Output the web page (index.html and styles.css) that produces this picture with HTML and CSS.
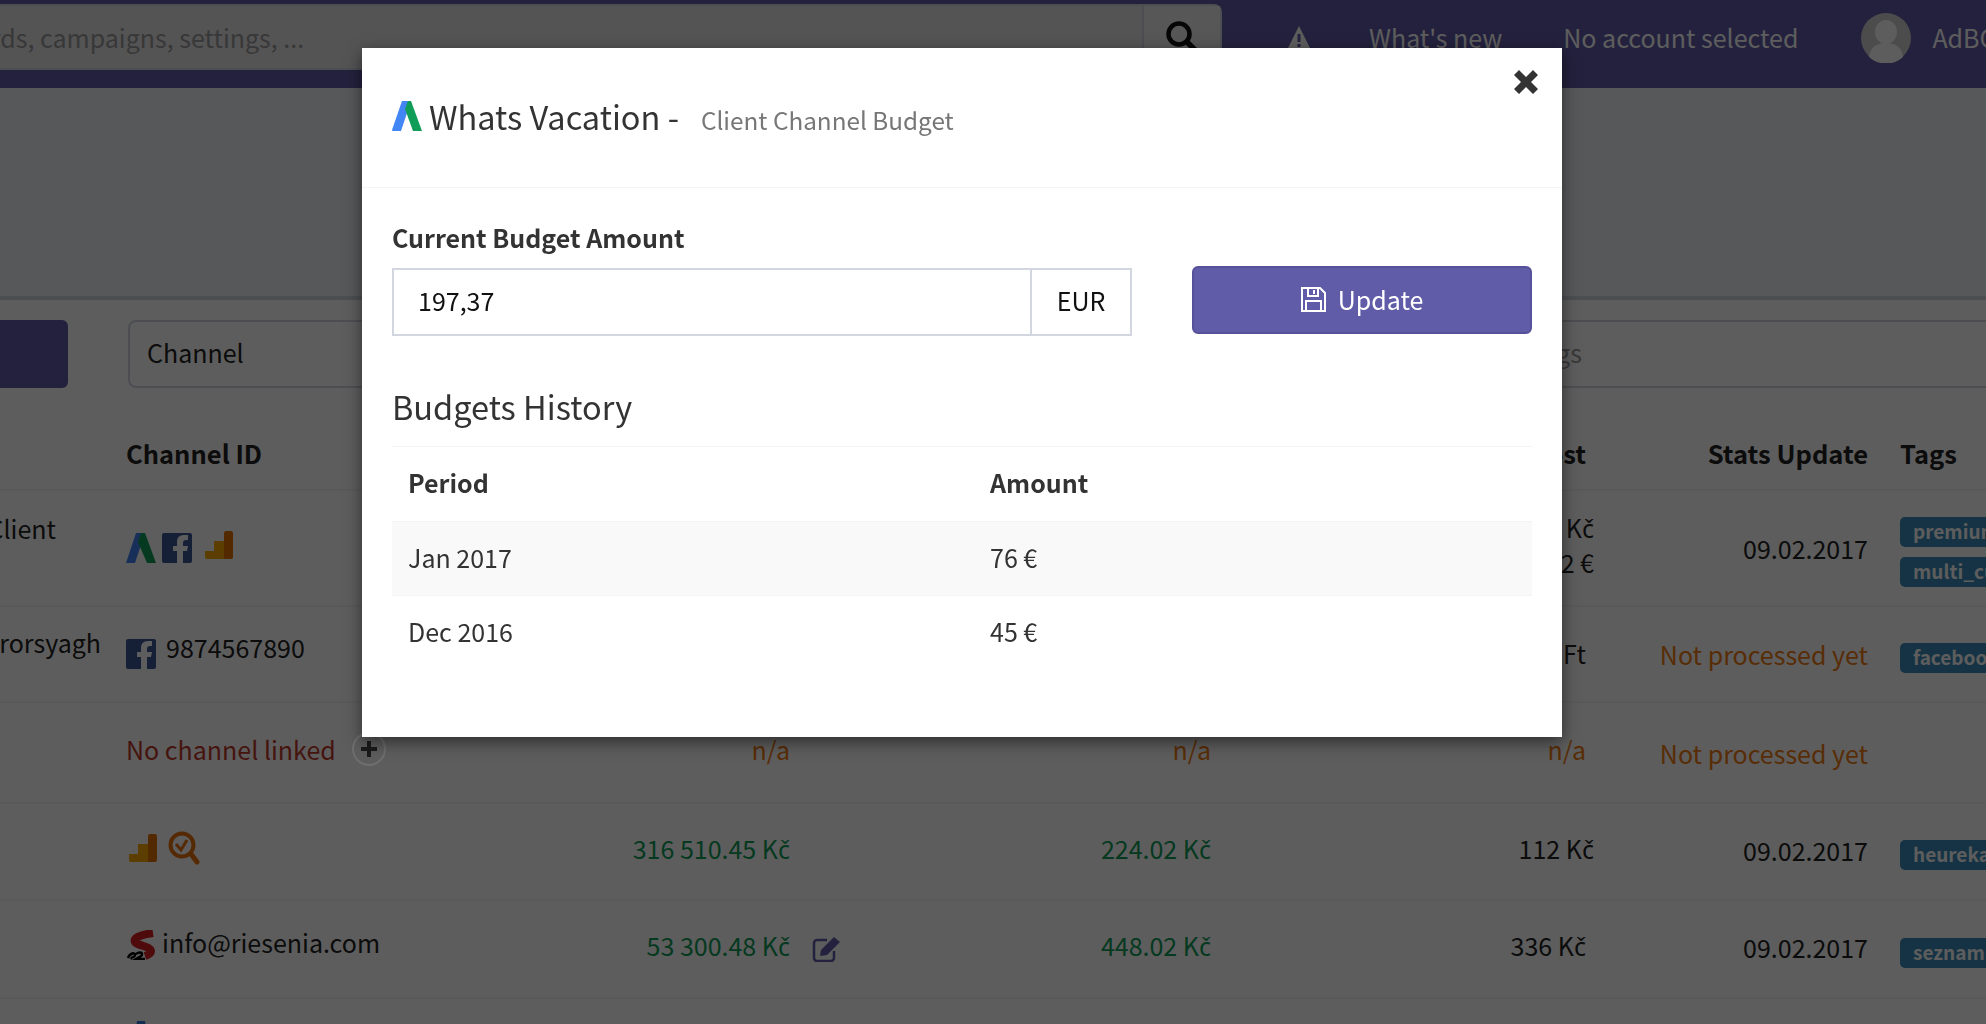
FILE: index.html
```html
<!DOCTYPE html>
<html lang="en">
<head>
	<meta charset="UTF-8">
	<title>Client Channel Budget</title>
	<link rel="stylesheet" href="styles.css">
</head>
<body>
	<div class="page">
		<header class="topbar">
			<div class="search">
				<div class="searchText">Search keywords, campaigns, settings, ...</div>
				<div class="searchBtn">
					<svg width="34" height="34" viewBox="0 0 34 34"><circle cx="14" cy="14" r="10.5" fill="none" stroke="#111" stroke-width="4.5"/><path d="M22 22l9 9" stroke="#111" stroke-width="5.5" stroke-linecap="round"/></svg>
				</div>
			</div>
			<svg class="warn" width="24" height="24" viewBox="0 0 24 24"><path d="M12 0L24 24H0z" fill="#fff"/><path d="M10.5 8h3v8h-3zM10.5 18h3v3h-3z" fill="#605ca8"/></svg>
			<div class="navLink">What's new</div>
			<div class="navLink">No account selected</div>
			<div class="avatar">
				<svg width="50" height="50" viewBox="0 0 50 50"><circle cx="25" cy="25" r="25" fill="#d0d0d0"/><ellipse cx="25" cy="19" rx="11" ry="12" fill="#fff"/><path d="M8 44c1-10 8-14 17-14s16 4 17 14a25 25 0 0 1-34 0z" fill="#fff"/></svg>
			</div>
			<div class="navLink">AdBC</div>
		</header>
		<div class="subhead"></div>
		<div class="content">
			<div class="filters">
				<div class="filterBtn"></div>
				<div class="filterBox">Channel</div>
				<div class="filterBox tagBox">Tags</div>
			</div>
			<table class="list">
				<colgroup>
					<col class="c1"><col class="c2"><col class="c3"><col class="c4"><col class="c5"><col class="c6"><col class="c7"><col class="c8">
				</colgroup>
				<thead>
					<tr><th></th><th>Channel ID</th><th></th><th></th><th></th><th class="num cost">Cost</th><th class="num">Stats Update</th><th>Tags</th></tr>
				</thead>
				<tbody>
					<tr class="r1">
						<td class="name">Client</td>
						<td>
							<div class="chan">
								<svg width="30" height="30" viewBox="0 0 30 30"><path d="M10 0h9L9 30H0z" fill="#4285f4"/><path d="M12 9l3-9h4l11 30h-9z" fill="#0f9d58"/></svg>
								<svg width="30" height="30" viewBox="0 0 30 30"><rect width="30" height="30" rx="2" fill="#3b5998"/><path d="M21 30V18h4l1-5h-5v-3c0-2 1-3 3-3h2V2h-4c-5 0-7 3-7 7v4h-4v5h4v12z" fill="#fff"/></svg>
								<svg class="shift" width="28" height="28" viewBox="0 0 28 28"><path d="M0 20h9v8H2a2 2 0 0 1-2-2z" fill="#f9ab00"/><path d="M9 10h10v18H9z" fill="#f9ab00"/><path d="M19 2a2 2 0 0 1 2-2h5a2 2 0 0 1 2 2v24a2 2 0 0 1-2 2h-7z" fill="#e37400"/></svg>
							</div>
						</td>
						<td></td><td></td><td></td>
						<td class="num cost wide two">112 K<span class="cz">č</span><br>0.42 €</td>
						<td class="num date">09.02.2017</td>
						<td class="tagCell"><span class="tag">premium</span><span class="tag">multi_currency</span></td>
					</tr>
					<tr class="r2">
						<td class="name">Errorsyagh</td>
						<td>
							<div class="chan">
								<svg width="30" height="30" viewBox="0 0 30 30"><rect width="30" height="30" rx="2" fill="#3b5998"/><path d="M21 30V18h4l1-5h-5v-3c0-2 1-3 3-3h2V2h-4c-5 0-7 3-7 7v4h-4v5h4v12z" fill="#fff"/></svg>
								<span class="chanId">9874567890</span>
							</div>
						</td>
						<td></td><td></td><td></td>
						<td class="num cost ft">900 Ft</td>
						<td class="num pending">Not processed yet</td>
						<td class="tagCell"><span class="tag">facebook</span></td>
					</tr>
					<tr class="r3">
						<td></td>
						<td class="upper">
							<div class="chan">
								<span class="noChan">No channel linked</span>
								<span class="addBtn">
									<svg width="18" height="18" viewBox="0 0 18 18"><path d="M7 1h4v6h6v4h-6v6H7v-6H1V7h6z" fill="#1a1a1a"/></svg>
								</span>
							</div>
						</td>
						<td class="num warnText">n/a</td><td></td>
						<td class="num warnText">n/a</td>
						<td class="num cost warnText">n/a</td>
						<td class="num pending">Not processed yet</td>
						<td></td>
					</tr>
					<tr class="r4">
						<td></td>
						<td class="upper">
							<div class="chan">
								<svg class="ga" width="28" height="28" viewBox="0 0 28 28"><path d="M0 20h9v8H2a2 2 0 0 1-2-2z" fill="#f9ab00"/><path d="M9 10h10v18H9z" fill="#f9ab00"/><path d="M19 2a2 2 0 0 1 2-2h5a2 2 0 0 1 2 2v24a2 2 0 0 1-2 2h-7z" fill="#e37400"/></svg>
								<svg class="mag" width="32" height="34" viewBox="0 0 32 34"><circle cx="14" cy="14" r="11.5" fill="none" stroke="#e8710a" stroke-width="4"/><path d="M8 13l5 6 6-10" fill="none" stroke="#e8710a" stroke-width="3"/><path d="M23 23l6 8" stroke="#e8710a" stroke-width="5" stroke-linecap="round"/></svg>
							</div>
						</td>
						<td class="num good">316 510.45 K<span class="cz">č</span></td><td></td>
						<td class="num good">224.02 K<span class="cz">č</span></td>
						<td class="num cost wide">112 K<span class="cz">č</span></td>
						<td class="num date">09.02.2017</td>
						<td class="tagCell"><span class="tag">heureka</span></td>
					</tr>
					<tr class="r5">
						<td></td>
						<td class="upper">
							<div class="chan">
								<svg width="30" height="30" viewBox="0 0 30 30"><path d="M27 3C13 5 7 8 9 12c3 4 15 4 16 9 0 3-3 4-6 5" fill="none" stroke="#d81f1f" stroke-width="8"/><path d="M2 28c2-5 7-6 7-3 0 3-5 2-3 4M10 24c4-3 8-1 5 2l-5 3h9" fill="none" stroke="#000" stroke-width="2.5"/></svg>
								<span class="chanId mail">info@riesenia.com</span>
							</div>
						</td>
						<td class="num good">53 300.48 K<span class="cz">č</span></td>
						<td class="editCell">
							<svg width="30" height="26" viewBox="0 0 30 26"><path d="M15 4H5a3 3 0 0 0-3 3v15a3 3 0 0 0 3 3h14a3 3 0 0 0 3-3v-7" fill="none" stroke="#605ca8" stroke-width="2.5"/><path d="M8 20l1-6L22 1l6 5-13 13z" fill="#605ca8"/></svg>
						</td>
						<td class="num good">448.02 K<span class="cz">č</span></td>
						<td class="num cost">336 K<span class="cz">č</span></td>
						<td class="num date">09.02.2017</td>
						<td class="tagCell"><span class="tag">seznam</span></td>
					</tr>
					<tr class="r6">
						<td></td>
						<td class="lastCell"><svg class="lastIcon" width="12" height="12" viewBox="0 0 12 12"><path d="M2 0h8l2 12H0z" fill="#3b7ddd"/></svg></td>
						<td></td><td></td><td></td><td></td><td></td><td></td>
					</tr>
				</tbody>
			</table>
		</div>
	</div>

	<div class="overlay"></div>

	<div class="modal">
		<div class="modalHead">
			<svg class="modalLogo" width="30" height="30" viewBox="0 0 30 30"><path d="M10 0h9L9 30H1a1 1 0 0 1-1-1z" fill="#4285f4"/><path d="M13 8l3-8h3l11 30h-9z" fill="#0f9d58"/></svg>
			<h2 class="modalTitle">Whats Vacation -</h2>
			<span class="modalSub">Client Channel Budget</span>
			<svg class="close" width="24" height="24" viewBox="0 0 24 24"><path d="M5 0l7 7 7-7 5 5-7 7 7 7-5 5-7-7-7 7-5-5 7-7-7-7z" fill="#333"/></svg>
		</div>
		<div class="modalBody">
			<div class="budgetLabel">Current Budget Amount</div>
			<div class="budgetRow">
				<div class="inputGroup">
					<div class="amount">197,37</div>
					<div class="currency">EUR</div>
				</div>
				<div class="updateBtn">
					<svg width="25" height="25" viewBox="0 0 25 25"><path d="M2 1h17l5 5v18H1V1z" fill="none" stroke="#fff" stroke-width="2"/><path d="M7 1v8h10V1M13 3v4M5 24V14h15v10" fill="none" stroke="#fff" stroke-width="2"/></svg>
					Update
				</div>
			</div>
			<h3 class="historyTitle">Budgets History</h3>
			<table class="history">
				<thead><tr><th class="periodCol">Period</th><th>Amount</th></tr></thead>
				<tbody>
					<tr class="odd"><td>Jan 2017</td><td>76 €</td></tr>
					<tr><td>Dec 2016</td><td>45 €</td></tr>
				</tbody>
			</table>
		</div>
	</div>
</body>
</html>
```

FILE: styles.css
```css
html, body{
	margin: 0;
	height: 100%;
	overflow: hidden;
}
body{
	font-family: "Noto Sans CJK SC", "Noto Sans", sans-serif;
	font-size: 25px;
	color: #333;
	background: #ecf0f5;
}
.page{
	height: 1024px;
	overflow: hidden;
}
.cz{
	font-family: "Noto Sans", sans-serif;
}

/* top bar */
.topbar{
	display: flex;
	align-items: center;
	height: 88px;
	background: #605ca8;
	box-sizing: border-box;
	padding-bottom: 12px;
}
.search{
	display: flex;
	flex: none;
	align-self: flex-start;
	width: 1222px;
	height: 66px;
	margin-top: 4px;
	box-sizing: border-box;
	background: #e6e6e8;
	border: 2px solid #d2d6de;
	border-left: 0;
	border-radius: 0 8px 8px 0;
	color: #999;
}
.searchText{
	flex: 1;
	margin-left: -170px;
	line-height: 62px;
	white-space: nowrap;
}
.searchBtn{
	display: flex;
	align-items: center;
	justify-content: center;
	width: 76px;
	border-left: 2px solid #d2d6de;
	background: #eee;
}
.warn{
	flex: none;
	margin: 0 58px 0 65px;
}
.navLink{
	flex: none;
	color: #fff;
	margin: 0 61px 2px 0;
	white-space: nowrap;
}
.avatar{
	flex: none;
	margin: 0 21px 0 2px;
	height: 50px;
}
.avatar svg{
	display: block;
}

.subhead{
	height: 208px;
	background: #ecf0f5;
	border-bottom: 4px solid #d2d6de;
}

/* list under the modal */
.content{
	background: #fff;
	height: 724px;
	overflow: hidden;
}
.filters{
	display: flex;
	gap: 60px;
	height: 68px;
	padding-top: 20px;
}
.filterBtn{
	flex: none;
	width: 68px;
	height: 68px;
	background: #605ca8;
	border-radius: 0 6px 6px 0;
}
.filterBox{
	flex: none;
	width: 500px;
	line-height: 60px;
	height: 64px;
	padding-left: 17px;
	border: 2px solid #d2d6de;
	border-radius: 8px;
	color: #222;
}
.tagBox{
	width: 600px;
	margin-left: 803px;
	padding-left: 15px;
	color: #999;
}
.list{
	width: 2110px;
	margin-left: -110px;
	margin-top: 29px;
	border-collapse: collapse;
	table-layout: fixed;
	white-space: nowrap;
	color: #222;
}
.c1{ width: 220px; }
.c2{ width: 380px; }
.c3{ width: 316px; }
.c4{ width: 50px; }
.c5{ width: 371px; }
.c6{ width: 383px; }
.c7{ width: 274px; }
.c8{ width: 116px; }
.list th{
	height: 70px;
	padding: 0 16px 2px;
	text-align: left;
	font-size: 25.5px;
	font-weight: 700;
	color: #222;
}
.list td{
	padding: 0 16px;
	border-top: 2px solid #f4f4f4;
	vertical-align: middle;
}
.list th.num, .list td.num{
	text-align: right;
	padding-bottom: 8px;
}
.list th.num{
	padding-bottom: 2px;
}
.list th.cost, .list td.cost{
	padding-right: 24px;
}
.list td.wide{
	padding-right: 16px;
}
.list td.two{
	line-height: 34px;
}
.list td.ft{
	padding-bottom: 3px;
}
.list td.date{
	padding-bottom: 4px;
}
.r1 td.date{
	padding-bottom: 0;
}
.list td.pending{
	padding-bottom: 0;
	color: #f07c12;
}
.r1{ height: 116px; }
.r2{ height: 96px; }
.r3{ height: 101px; }
.r4{ height: 97px; }
.r5{ height: 98px; }
.r6{ height: 60px; }
.list td.name{
	text-align: right;
}
.r1 td.name{
	padding-right: 54px;
	padding-bottom: 40px;
}
.r2 td.name{
	padding-right: 9px;
	padding-bottom: 24px;
}
.list td.upper{
	padding-bottom: 8px;
}
.chan{
	display: flex;
	align-items: center;
	gap: 6px;
}
.chan .shift{
	margin: -7px 0 0 7px;
}
.chan .ga{
	margin-left: 3px;
}
.chan .mag{
	margin-left: 5px;
}
.chanId{
	margin: -14px 0 0 4px;
	line-height: 30px;
}
.chanId.mail{
	margin: -6px 0 0 0;
}
.noChan{
	color: #c0392b;
}
.addBtn{
	position: relative;
	z-index: 2;
	display: flex;
	align-items: center;
	justify-content: center;
	width: 34px;
	height: 34px;
	margin-left: 10px;
	border: 2px solid #6e6e6e;
	border-radius: 50%;
	box-sizing: border-box;
}
.list td.lastCell{
	vertical-align: top;
	padding: 22px 0 0 25px;
}
.lastIcon{
	display: block;
}
.good{
	color: #0f9d58;
}
.warnText{
	color: #f07c12;
}
.list td.editCell{
	padding: 4px 0 0 6px;
}
.list td.tagCell{
	padding-top: 7px;
}
.tag{
	display: block;
	width: 200px;
	height: 30px;
	line-height: 27px;
	margin: 10px 0;
	padding-left: 13px;
	border-radius: 5px;
	background: #3c8dbc;
	color: #fff;
	font-size: 19px;
	font-weight: 700;
}

/* modal */
.overlay{
	position: fixed;
	inset: 0;
	z-index: 1;
	background: rgba(0,0,0,.635);
}
.modal{
	position: absolute;
	z-index: 3;
	left: 362px;
	top: 48px;
	width: 1200px;
	height: 689px;
	background: #fff;
	box-shadow: 0 5px 15px rgba(0,0,0,.5);
	color: #333;
}
.modalHead{
	position: relative;
	display: flex;
	align-items: center;
	height: 135px;
	padding: 0 0 4px 30px;
	border-bottom: 1px solid #f4f4f4;
}
.modalTitle{
	margin: 0 0 0 7px;
	font-size: 32.5px;
	font-weight: 400;
}
.modalSub{
	margin: 7px 0 0 22px;
	font-size: 24.3px;
	color: #777;
}
.close{
	position: absolute;
	right: 24px;
	top: 22px;
}
.modalBody{
	padding: 32px 30px 0;
}
.budgetLabel{
	font-weight: 700;
	line-height: 34px;
	height: 48px;
}
.budgetRow{
	display: flex;
	justify-content: space-between;
	align-items: flex-start;
}
.inputGroup{
	display: flex;
	width: 740px;
	height: 68px;
	box-sizing: border-box;
	border: 2px solid #d2d6de;
	color: #111;
}
.amount{
	flex: 1;
	padding-left: 24px;
	line-height: 60px;
}
.currency{
	width: 98px;
	text-align: center;
	border-left: 2px solid #d2d6de;
	line-height: 60px;
}
.updateBtn{
	display: flex;
	align-items: center;
	justify-content: center;
	gap: 12px;
	width: 340px;
	height: 68px;
	margin-top: -2px;
	padding-bottom: 2px;
	box-sizing: border-box;
	background: #605ca8;
	border: 2px solid #555299;
	border-radius: 6px;
	color: #fff;
}
.historyTitle{
	margin: 46px 0 0;
	height: 64px;
	font-size: 32.5px;
	font-weight: 400;
	line-height: 48px;
	border-bottom: 1px solid #f4f4f4;
}
.history{
	width: 100%;
	border-collapse: collapse;
	table-layout: fixed;
}
.history th{
	height: 70px;
	padding: 0 16px 4px;
	text-align: left;
	font-weight: 700;
	color: #333;
}
.history .periodCol{
	width: 550px;
}
.history td{
	height: 70px;
	padding: 0 16px 3px;
	border-top: 1px solid #f4f4f4;
}
.history .odd td{
	background: #f9f9f9;
}
```
